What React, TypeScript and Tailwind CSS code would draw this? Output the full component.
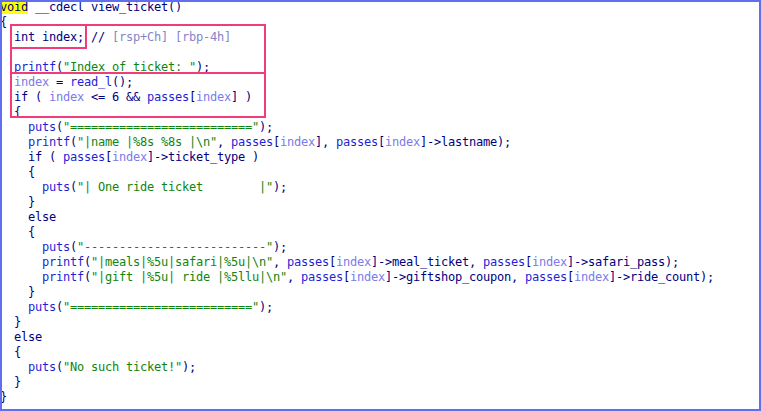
import React from "react";

type Tok = [string, string?];

const K = "text-[#000080]"; // keywords, punctuation
const F = "text-[#1f1fd6]"; // functions / globals
const V = "text-[#7b7bea]"; // locals
const S = "text-[#10840f]"; // strings
const C = "text-[#8585c8]"; // comment detail

const lines: Tok[][] = [
  [["void", K + " bg-[#ffff00]"], [" __cdecl view_ticket()", K]],
  [["{", K]],
  [["  int index; ", K], ["// ", K], ["[rsp+Ch] [rbp-4h]", C]],
  [[""]],
  [["  ", K], ["printf", F], ["(", K], ['"Index of ticket: "', S], [");", K]],
  [["  ", K], ["index", V], [" = ", K], ["read_l", F], ["();", K]],
  [["  if ( ", K], ["index", V], [" <= 6 && ", K], ["passes", F], ["[", K], ["index", V], ["] )", K]],
  [["  {", K]],
  [["    ", K], ["puts", F], ["(", K], ['"=========================="', S], [");", K]],
  [
    ["    ", K], ["printf", F], ["(", K], ['"|name |%8s %8s |\\n"', S], [", ", K],
    ["passes", F], ["[", K], ["index", V], ["], ", K],
    ["passes", F], ["[", K], ["index", V], ["]->lastname);", K],
  ],
  [["    if ( ", K], ["passes", F], ["[", K], ["index", V], ["]->ticket_type )", K]],
  [["    {", K]],
  [["      ", K], ["puts", F], ["(", K], ['"| One ride ticket        |"', S], [");", K]],
  [["    }", K]],
  [["    else", K]],
  [["    {", K]],
  [["      ", K], ["puts", F], ["(", K], ['"--------------------------"', S], [");", K]],
  [
    ["      ", K], ["printf", F], ["(", K], ['"|meals|%5u|safari|%5u|\\n"', S], [", ", K],
    ["passes", F], ["[", K], ["index", V], ["]->meal_ticket, ", K],
    ["passes", F], ["[", K], ["index", V], ["]->safari_pass);", K],
  ],
  [
    ["      ", K], ["printf", F], ["(", K], ['"|gift |%5u| ride |%5llu|\\n"', S], [", ", K],
    ["passes", F], ["[", K], ["index", V], ["]->giftshop_coupon, ", K],
    ["passes", F], ["[", K], ["index", V], ["]->ride_count);", K],
  ],
  [["    }", K]],
  [["    ", K], ["puts", F], ["(", K], ['"=========================="', S], [");", K]],
  [["  }", K]],
  [["  else", K]],
  [["  {", K]],
  [["    ", K], ["puts", F], ["(", K], ['"No such ticket!"', S], [");", K]],
  [["  }", K]],
  [["}", K]],
];

export default function App() {
  return (
    <div className="w-[761px] h-[411px] bg-white border-2 border-[#5f6ff0] overflow-hidden">
      <div className="relative -ml-[2px] -mt-[2px] font-['DejaVu_Sans_Mono',monospace] text-[12px] tracking-[-0.225px] leading-[15px] whitespace-pre">
        {lines.map((line, i) => (
          <div key={i} className="h-[15px]">
            {line.map(([t, cls], j) => (
              <span key={j} className={cls}>{t}</span>
            ))}
          </div>
        ))}

        {/* annotation boxes */}
        <div className="absolute left-[10px] top-[24px] w-[256px] h-[50px] border-2 border-[#f03c78]" />
        <div className="absolute left-[10px] top-[24px] w-[77px] h-[25px] border-2 border-[#f03c78]" />
        <div className="absolute left-[10px] top-[72px] w-[256px] h-[46px] border-2 border-[#f03c78]" />
      </div>
    </div>
  );
}
